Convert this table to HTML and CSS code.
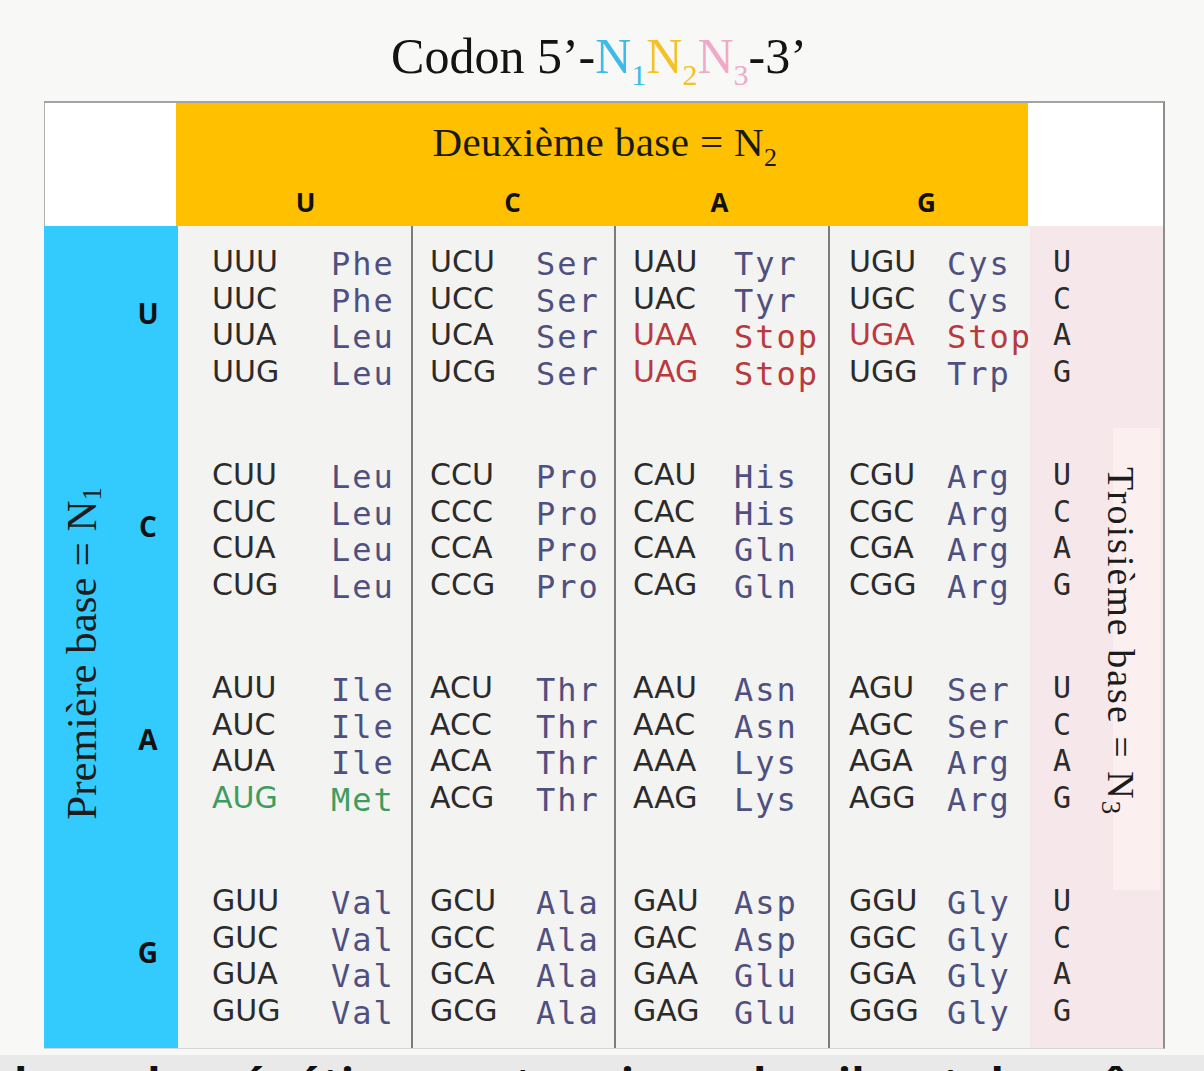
FILE: index.html
```html
<!DOCTYPE html>
<html lang="fr">
<head>
<meta charset="utf-8">
<title>Code génétique</title>
<link rel="stylesheet" href="styles.css">
</head>
<body>
<h1 class="title">Codon 5’-<span class="n1">N<sub>1</sub></span><span class="n2">N<sub>2</sub></span><span class="n3">N<sub>3</sub></span>-3’</h1>
<div class="table">
  <div class="head">
    <div class="corner"></div>
    <div class="second">
      <div class="second-title"><span>Deuxième base = N<sub>2</sub></span></div>
      <div class="second-letters"><span>U</span><span>C</span><span>A</span><span>G</span></div>
    </div>
    <div class="corner-right"></div>
  </div>
  <div class="body">
    <div class="first">
      <div class="first-label"><span>Première base = N<sub>1</sub></span></div>
      <div class="first-letters">
        <div class="grp">U</div>
        <div class="grp">C</div>
        <div class="grp">A</div>
        <div class="grp">G</div>
      </div>
    </div>

    <div class="col c1">
      <div class="grp">
        <div class="row"><span class="cod">UUU</span><span class="aa">Phe</span></div>
        <div class="row"><span class="cod">UUC</span><span class="aa">Phe</span></div>
        <div class="row"><span class="cod">UUA</span><span class="aa">Leu</span></div>
        <div class="row"><span class="cod">UUG</span><span class="aa">Leu</span></div>
      </div>
      <div class="grp">
        <div class="row"><span class="cod">CUU</span><span class="aa">Leu</span></div>
        <div class="row"><span class="cod">CUC</span><span class="aa">Leu</span></div>
        <div class="row"><span class="cod">CUA</span><span class="aa">Leu</span></div>
        <div class="row"><span class="cod">CUG</span><span class="aa">Leu</span></div>
      </div>
      <div class="grp">
        <div class="row"><span class="cod">AUU</span><span class="aa">Ile</span></div>
        <div class="row"><span class="cod">AUC</span><span class="aa">Ile</span></div>
        <div class="row"><span class="cod">AUA</span><span class="aa">Ile</span></div>
        <div class="row start"><span class="cod">AUG</span><span class="aa">Met</span></div>
      </div>
      <div class="grp">
        <div class="row"><span class="cod">GUU</span><span class="aa">Val</span></div>
        <div class="row"><span class="cod">GUC</span><span class="aa">Val</span></div>
        <div class="row"><span class="cod">GUA</span><span class="aa">Val</span></div>
        <div class="row"><span class="cod">GUG</span><span class="aa">Val</span></div>
      </div>
    </div>

    <div class="col c2">
      <div class="grp">
        <div class="row"><span class="cod">UCU</span><span class="aa">Ser</span></div>
        <div class="row"><span class="cod">UCC</span><span class="aa">Ser</span></div>
        <div class="row"><span class="cod">UCA</span><span class="aa">Ser</span></div>
        <div class="row"><span class="cod">UCG</span><span class="aa">Ser</span></div>
      </div>
      <div class="grp">
        <div class="row"><span class="cod">CCU</span><span class="aa">Pro</span></div>
        <div class="row"><span class="cod">CCC</span><span class="aa">Pro</span></div>
        <div class="row"><span class="cod">CCA</span><span class="aa">Pro</span></div>
        <div class="row"><span class="cod">CCG</span><span class="aa">Pro</span></div>
      </div>
      <div class="grp">
        <div class="row"><span class="cod">ACU</span><span class="aa">Thr</span></div>
        <div class="row"><span class="cod">ACC</span><span class="aa">Thr</span></div>
        <div class="row"><span class="cod">ACA</span><span class="aa">Thr</span></div>
        <div class="row"><span class="cod">ACG</span><span class="aa">Thr</span></div>
      </div>
      <div class="grp">
        <div class="row"><span class="cod">GCU</span><span class="aa">Ala</span></div>
        <div class="row"><span class="cod">GCC</span><span class="aa">Ala</span></div>
        <div class="row"><span class="cod">GCA</span><span class="aa">Ala</span></div>
        <div class="row"><span class="cod">GCG</span><span class="aa">Ala</span></div>
      </div>
    </div>

    <div class="col c3">
      <div class="grp">
        <div class="row"><span class="cod">UAU</span><span class="aa">Tyr</span></div>
        <div class="row"><span class="cod">UAC</span><span class="aa">Tyr</span></div>
        <div class="row stop"><span class="cod">UAA</span><span class="aa">Stop</span></div>
        <div class="row stop"><span class="cod">UAG</span><span class="aa">Stop</span></div>
      </div>
      <div class="grp">
        <div class="row"><span class="cod">CAU</span><span class="aa">His</span></div>
        <div class="row"><span class="cod">CAC</span><span class="aa">His</span></div>
        <div class="row"><span class="cod">CAA</span><span class="aa">Gln</span></div>
        <div class="row"><span class="cod">CAG</span><span class="aa">Gln</span></div>
      </div>
      <div class="grp">
        <div class="row"><span class="cod">AAU</span><span class="aa">Asn</span></div>
        <div class="row"><span class="cod">AAC</span><span class="aa">Asn</span></div>
        <div class="row"><span class="cod">AAA</span><span class="aa">Lys</span></div>
        <div class="row"><span class="cod">AAG</span><span class="aa">Lys</span></div>
      </div>
      <div class="grp">
        <div class="row"><span class="cod">GAU</span><span class="aa">Asp</span></div>
        <div class="row"><span class="cod">GAC</span><span class="aa">Asp</span></div>
        <div class="row"><span class="cod">GAA</span><span class="aa">Glu</span></div>
        <div class="row"><span class="cod">GAG</span><span class="aa">Glu</span></div>
      </div>
    </div>

    <div class="col c4">
      <div class="grp">
        <div class="row"><span class="cod">UGU</span><span class="aa">Cys</span></div>
        <div class="row"><span class="cod">UGC</span><span class="aa">Cys</span></div>
        <div class="row stop"><span class="cod">UGA</span><span class="aa">Stop</span></div>
        <div class="row"><span class="cod">UGG</span><span class="aa">Trp</span></div>
      </div>
      <div class="grp">
        <div class="row"><span class="cod">CGU</span><span class="aa">Arg</span></div>
        <div class="row"><span class="cod">CGC</span><span class="aa">Arg</span></div>
        <div class="row"><span class="cod">CGA</span><span class="aa">Arg</span></div>
        <div class="row"><span class="cod">CGG</span><span class="aa">Arg</span></div>
      </div>
      <div class="grp">
        <div class="row"><span class="cod">AGU</span><span class="aa">Ser</span></div>
        <div class="row"><span class="cod">AGC</span><span class="aa">Ser</span></div>
        <div class="row"><span class="cod">AGA</span><span class="aa">Arg</span></div>
        <div class="row"><span class="cod">AGG</span><span class="aa">Arg</span></div>
      </div>
      <div class="grp">
        <div class="row"><span class="cod">GGU</span><span class="aa">Gly</span></div>
        <div class="row"><span class="cod">GGC</span><span class="aa">Gly</span></div>
        <div class="row"><span class="cod">GGA</span><span class="aa">Gly</span></div>
        <div class="row"><span class="cod">GGG</span><span class="aa">Gly</span></div>
      </div>
    </div>

    <div class="third">
      <div class="third-letters">
        <div class="grp"><div class="row">U</div><div class="row">C</div><div class="row">A</div><div class="row">G</div></div>
        <div class="grp"><div class="row">U</div><div class="row">C</div><div class="row">A</div><div class="row">G</div></div>
        <div class="grp"><div class="row">U</div><div class="row">C</div><div class="row">A</div><div class="row">G</div></div>
        <div class="grp"><div class="row">U</div><div class="row">C</div><div class="row">A</div><div class="row">G</div></div>
      </div>
      <div class="third-label"><span>Troisième base = N<sub>3</sub></span></div>
    </div>
  </div>
</div>
<div class="strip"><p>le code génétique est universel : il est le même chez presque tous les êtres vivants</p></div>
</body>
</html>
```

FILE: styles.css
```css
html, body {
  margin: 0;
  padding: 0;
}

body {
  width: 1204px;
  height: 1071px;
  overflow: hidden;
  background: #f8f8f6;
  font-family: "Liberation Serif", serif;
  color: #161616;
}

.title {
  margin: 31px 0 0;
  height: 50px;
  line-height: 50px;
  font-size: 50px;
  font-weight: 400;
  text-align: center;
  font-family: "Liberation Serif", serif;
  color: #141414;
  padding-right: 6px;
}

.title sub {
  font-size: 30px;
  vertical-align: -12px;
  line-height: 0;
}

.n1 { color: #3fbbe9; }
.n2 { color: #f3c22b; }
.n3 { color: #f2a9c8; }

.table {
  margin: 20px 0 0 44px;
  width: 1121px;
  box-sizing: border-box;
  border-top: 2px solid #a2a2a2;
  border-right: 2px solid #8e8e8e;
  border-bottom: 1px solid #d4d4d4;
}

.head {
  display: flex;
  height: 123px;
}

.corner {
  width: 132px;
  box-sizing: border-box;
  background: #ffffff;
  border-left: 1px solid #b4b4b4;
}

.corner-right {
  flex: 1;
  background: #ffffff;
}

.second {
  width: 852px;
  background: #ffc000;
  display: flex;
  flex-direction: column;
}

.second-title {
  height: 80px;
  display: flex;
  align-items: center;
  justify-content: center;
  font-size: 41px;
  letter-spacing: 0.4px;
  padding-left: 6px;
  color: #1a1a1a;
}

.second-title sub {
  font-size: 26px;
  vertical-align: -10px;
  line-height: 0;
}

.second-letters {
  height: 43px;
  display: grid;
  grid-template-columns: repeat(4, 207px);
  padding-left: 26px;
  padding-bottom: 3px;
  align-items: center;
  justify-items: center;
  font-family: "Open Sans", sans-serif;
  font-weight: 700;
  font-size: 26px;
  color: #111111;
}

.body {
  display: grid;
  grid-template-columns: 134px 233px 203px 214px 202px 1fr;
  height: 822px;
}

.first {
  background: #33cbfd;
  display: flex;
}

.first-label {
  width: 74px;
  box-sizing: border-box;
  padding-top: 32px;
  display: flex;
  align-items: center;
  justify-content: center;
}

.first-label span {
  writing-mode: vertical-rl;
  transform: rotate(180deg);
  white-space: nowrap;
  font-size: 43px;
  color: #1c1c1c;
}

.first-label sub,
.third-label sub {
  font-size: 27px;
  vertical-align: -10px;
  line-height: 0;
}

.first-letters {
  width: 60px;
  box-sizing: border-box;
  padding-top: 18px;
  font-family: "Open Sans", sans-serif;
  font-weight: 700;
  font-size: 28px;
  color: #111111;
}

.first-letters .grp {
  display: flex;
  align-items: center;
  justify-content: center;
  padding-bottom: 8px;
  box-sizing: border-box;
}

.grp {
  height: 146px;
}

.grp + .grp {
  margin-top: 67px;
}

.col {
  background: #f3f3f1;
  box-sizing: border-box;
  padding-top: 18px;
}

.c2, .c3, .c4 {
  border-left: 2px solid #7c7c7c;
}

.c1 { padding-left: 34px; }
.c2 { padding-left: 17px; }
.c3 { padding-left: 17px; }
.c4 { padding-left: 19px; }

.row {
  display: flex;
  height: 36.5px;
  line-height: 36.5px;
  white-space: nowrap;
}

.cod {
  flex: none;
  font-family: "DejaVu Sans", sans-serif;
  font-size: 30px;
  color: #2b2b2b;
}

.c1 .cod { width: 119px; }
.c2 .cod { width: 106px; }
.c3 .cod { width: 101px; }
.c4 .cod { width: 98px; }

.aa {
  padding-top: 2px;
  font-family: "DejaVu Sans Mono", monospace;
  font-size: 32px;
  letter-spacing: 2px;
  color: #4f507f;
}

.stop .cod,
.stop .aa {
  color: #b93a3e;
}

.start .cod,
.start .aa {
  color: #3e9d5e;
}

.third {
  background: #f6e8ea;
  display: flex;
}

.third-letters {
  width: 64px;
  box-sizing: border-box;
  padding-top: 18px;
  font-family: "DejaVu Sans Mono", monospace;
  font-size: 30px;
  color: #2b2b2b;
}

.third-letters .row {
  justify-content: center;
}

.third-label {
  margin-left: 19px;
  margin-top: 202px;
  width: 47px;
  height: 462px;
  box-sizing: border-box;
  padding-top: 39px;
  padding-right: 32px;
  background: #fbeff0;
  display: flex;
  justify-content: center;
}

.third-label span {
  writing-mode: vertical-rl;
  white-space: nowrap;
  font-size: 38px;
  letter-spacing: 2px;
  color: #1c1c1c;
}

.strip {
  margin-top: 6px;
  height: 16px;
  overflow: hidden;
  background: #e9e9e9;
}

.strip p {
  margin: 0;
  padding-top: 6px;
  padding-left: 14px;
  white-space: nowrap;
  font-family: "Open Sans", sans-serif;
  font-weight: 700;
  font-size: 44px;
  line-height: 44px;
  color: #111111;
  word-spacing: 18px;
}
```
